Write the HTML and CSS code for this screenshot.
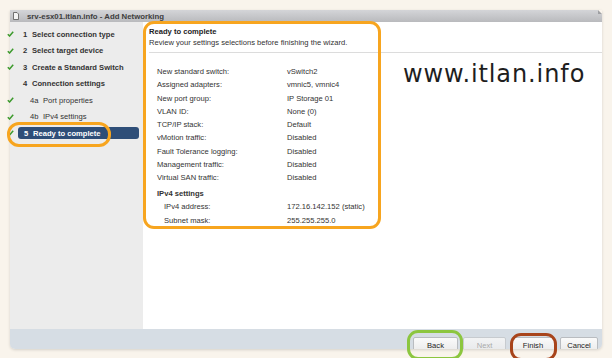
FILE: index.html
```html
<!DOCTYPE html>
<html>
<head>
<meta charset="utf-8">
<link rel="stylesheet" href="styles.css">
</head>
<body>
<div class="window">
  <div class="titlebar">
    <svg class="title-icon" width="6" height="8" viewBox="0 0 6 8"><path d="M0.5 0.5 H4 L5.5 2 V7.5 H0.5 Z" fill="#f4f4f4" stroke="#555" stroke-width="0.8"/></svg>
    <span class="title-text">srv-esx01.itlan.info - Add Networking</span>
  </div>
  <div class="main">
    <div class="sidebar">
      <div class="step"><span class="check"><svg width="7" height="6" viewBox="0 0 7 6"><path d="M0.8 3.2 L2.6 5 L6.2 0.8" fill="none" stroke="#3c9a2c" stroke-width="1.5"/></svg></span><span class="num">1</span><span class="label">Select connection type</span></div>
      <div class="step"><span class="check"><svg width="7" height="6" viewBox="0 0 7 6"><path d="M0.8 3.2 L2.6 5 L6.2 0.8" fill="none" stroke="#3c9a2c" stroke-width="1.5"/></svg></span><span class="num">2</span><span class="label">Select target device</span></div>
      <div class="step"><span class="check"><svg width="7" height="6" viewBox="0 0 7 6"><path d="M0.8 3.2 L2.6 5 L6.2 0.8" fill="none" stroke="#3c9a2c" stroke-width="1.5"/></svg></span><span class="num">3</span><span class="label">Create a Standard Switch</span></div>
      <div class="step"><span class="check"></span><span class="num">4</span><span class="label">Connection settings</span></div>
      <div class="step sub"><span class="check"><svg width="7" height="6" viewBox="0 0 7 6"><path d="M0.8 3.2 L2.6 5 L6.2 0.8" fill="none" stroke="#3c9a2c" stroke-width="1.5"/></svg></span><span class="num">4a</span><span class="label">Port properties</span></div>
      <div class="step sub"><span class="check"><svg width="7" height="6" viewBox="0 0 7 6"><path d="M0.8 3.2 L2.6 5 L6.2 0.8" fill="none" stroke="#3c9a2c" stroke-width="1.5"/></svg></span><span class="num">4b</span><span class="label">IPv4 settings</span></div>
      <div class="step current"><span class="check"><svg width="7" height="6" viewBox="0 0 7 6"><path d="M0.8 3.2 L2.6 5 L6.2 0.8" fill="none" stroke="#3c9a2c" stroke-width="1.5"/></svg></span><span class="sel"><span class="num">5</span><span class="label">Ready to complete</span></span></div>
    </div>
    <div class="content">
      <div class="header">
        <div class="h-title">Ready to complete</div>
        <div class="h-desc">Review your settings selections before finishing the wizard.</div>
      </div>
      <div class="summary">
        <div class="row"><span class="k">New standard switch:</span><span class="v">vSwitch2</span></div>
        <div class="row"><span class="k">Assigned adapters:</span><span class="v">vmnic5, vmnic4</span></div>
        <div class="row"><span class="k">New port group:</span><span class="v">IP Storage 01</span></div>
        <div class="row"><span class="k">VLAN ID:</span><span class="v">None (0)</span></div>
        <div class="row"><span class="k">TCP/IP stack:</span><span class="v">Default</span></div>
        <div class="row"><span class="k">vMotion traffic:</span><span class="v">Disabled</span></div>
        <div class="row"><span class="k">Fault Tolerance logging:</span><span class="v">Disabled</span></div>
        <div class="row"><span class="k">Management traffic:</span><span class="v">Disabled</span></div>
        <div class="row"><span class="k">Virtual SAN traffic:</span><span class="v">Disabled</span></div>
        <div class="section">IPv4 settings</div>
        <div class="row subrow"><span class="k">IPv4 address:</span><span class="v">172.16.142.152 (static)</span></div>
        <div class="row subrow"><span class="k">Subnet mask:</span><span class="v">255.255.255.0</span></div>
      </div>
    </div>
  </div>
  <div class="footer">
    <button class="btn w-back">Back</button>
    <button class="btn w-next" disabled>Next</button>
    <button class="btn w-finish">Finish</button>
    <button class="btn w-cancel">Cancel</button>
  </div>
</div>
<div class="watermark">www.itlan.info</div>
<div class="ring ring-box"></div>
<div class="ring ring-step"></div>
<div class="ring ring-back"></div>
<div class="ring ring-finish"></div>
</body>
</html>
```

FILE: styles.css
```css
html, body {
  margin: 0;
  padding: 0;
}
body {
  width: 612px;
  height: 358px;
  overflow: hidden;
  position: relative;
  background: #f9f4ec;
  font-family: "Liberation Sans", Arial, sans-serif;
  font-size: 7.6px;
  color: #333;
}
.window {
  margin: 10px 0 0 10px;
  width: 592px;
  height: 339px;
  display: flex;
  flex-direction: column;
  border-radius: 0 0 5px 5px;
  box-shadow: 0 1px 3px rgba(0,0,0,0.15);
}
.titlebar {
  height: 12px;
  flex: none;
  display: flex;
  align-items: center;
  padding-left: 3px;
  gap: 8px;
  background: linear-gradient(#d4d5d8, #b9babd);
  position: relative;
}
.titlebar::after {
  content: "";
  position: absolute;
  right: 0;
  top: 0;
  width: 0;
  height: 0;
  border-top: 4px solid #f9f4ec;
  border-left: 4px solid #9fa0a3;
}
.title-icon { display: block; }
.title-text {
  font-weight: bold;
  color: #3d3d3d;
  font-size: 7.8px;
}
.main {
  flex: 1;
  display: flex;
  min-height: 0;
}
.sidebar {
  width: 133px;
  flex: none;
  background: #ececec;
  padding-top: 4px;
  box-sizing: border-box;
}
.step {
  height: 16.5px;
  display: flex;
  align-items: center;
  font-weight: bold;
  color: #333;
  margin-left: -3px;
}
.check {
  width: 16px;
  flex: none;
  display: flex;
  align-items: center;
}
.check svg { display: block; }
.num { width: 9px; flex: none; }
.sub { font-weight: normal; }
.sub .num { width: 13px; margin-left: 7px; }
.sel {
  display: flex;
  align-items: center;
  background: #2e4e78;
  color: #fff;
  border-radius: 3px;
  height: 12px;
  width: 121px;
  margin-left: -5px;
  padding-left: 6px;
  box-sizing: border-box;
}
.content {
  flex: 1;
  background: #fff;
}
.header {
  margin-left: 6px;
  padding-top: 5px;
  padding-bottom: 4px;
  border-bottom: 1px solid #dcdcdc;
}
.h-title {
  font-weight: bold;
  color: #222;
  line-height: 10.5px;
}
.h-desc {
  line-height: 10.5px;
  color: #333;
}
.summary {
  padding-left: 14px;
  padding-top: 12px;
}
.row {
  display: flex;
  line-height: 13.3px;
}
.k { width: 130px; flex: none; }
.subrow .k { padding-left: 7px; width: 123px; }
.section {
  font-weight: bold;
  line-height: 13.3px;
  margin-top: 2.5px;
}
.footer {
  height: 20px;
  flex: none;
  background: #d6dde4;
  display: flex;
  justify-content: flex-end;
  gap: 5px;
  padding: 8px 4px 0 0;
  box-sizing: border-box;
  overflow: hidden;
  border-radius: 0 0 5px 5px;
}
.btn {
  font-family: "Liberation Sans", Arial, sans-serif;
  font-size: 7.6px;
  color: #222;
  height: 17px;
  flex: none;
  padding: 0;
  border: 1px solid #b9bcc0;
  border-radius: 2px;
  background: linear-gradient(#fafafa, #e9e9e9);
}
.btn:disabled { color: #aaa; background: linear-gradient(#f2f3f4, #e6e8ea); border-color: #c7cbcf; }
.w-back { width: 45px; }
.w-next { width: 43px; }
.w-finish { width: 44px; }
.w-cancel { width: 38px; }
.watermark {
  position: absolute;
  left: 403px;
  top: 60px;
  font-family: "DejaVu Sans", Verdana, sans-serif;
  font-size: 24px;
  color: #1e1e1e;
  letter-spacing: 0.9px;
}
.ring {
  position: absolute;
  border-style: solid;
  border-width: 3px;
  box-sizing: border-box;
}
.ring-box {
  left: 143px;
  top: 21px;
  width: 238px;
  height: 208px;
  border-color: #f7a51f;
  border-radius: 11px;
}
.ring-step {
  left: 7px;
  top: 122px;
  width: 104px;
  height: 25px;
  border-color: #f7a51f;
  border-radius: 12px;
}
.ring-back {
  left: 407px;
  top: 330px;
  width: 56px;
  height: 30px;
  border-color: #8cc63f;
  border-radius: 11px;
}
.ring-finish {
  left: 510px;
  top: 333px;
  width: 47px;
  height: 28px;
  border-color: #a8441b;
  border-radius: 11px;
}
```
